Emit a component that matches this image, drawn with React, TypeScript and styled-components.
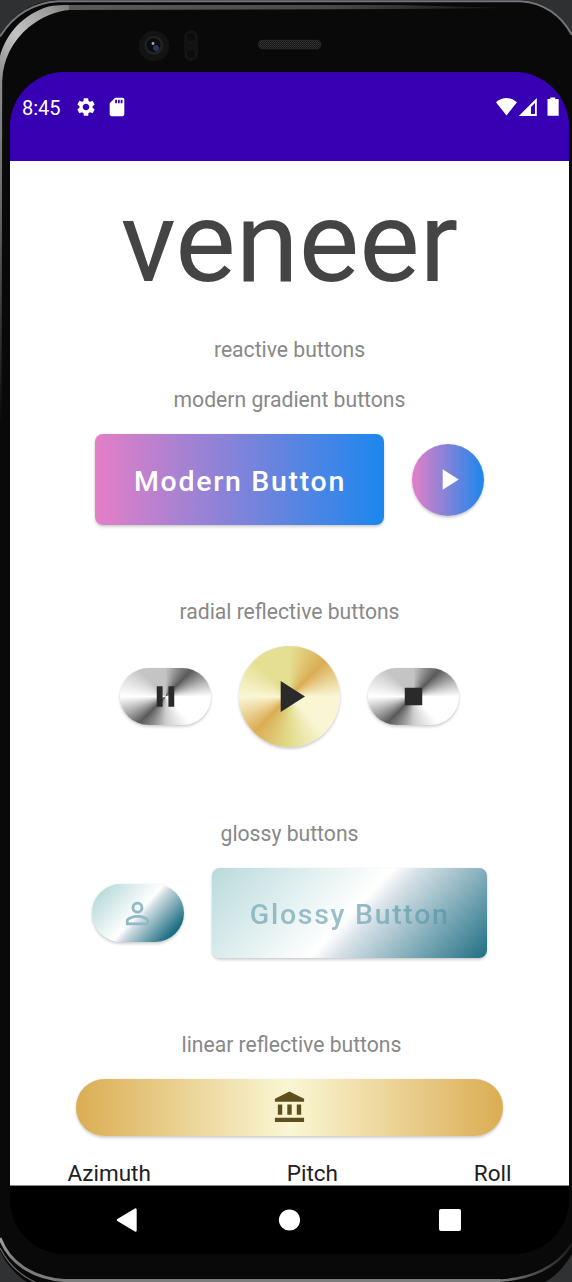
import React from 'react';
import styled, { createGlobalStyle } from 'styled-components';
import {
  MdAccountBalance,
  MdPause,
  MdPersonOutline,
  MdPlayArrow,
  MdSdCard,
  MdSettings,
  MdStop,
} from 'react-icons/md';

const GlobalStyle = createGlobalStyle`
  * { box-sizing: border-box; }
  body {
    margin: 0;
    background: #2d2e30;
    font-family: Roboto, "Liberation Sans", sans-serif;
  }
`;

const silver = `conic-gradient(#c4c4c4 0deg, #5a5a5a 45deg, #ffffff 90deg, #ffffff 135deg,
  #cccccc 180deg, #5a5a5a 225deg, #ffffff 270deg, #c4c4c4 315deg, #c4c4c4 360deg)`;
const gold = `conic-gradient(#e4df92 0deg, #dbad53 45deg, #faf6d4 90deg, #faf6d4 135deg,
  #e2dc8c 180deg, #dbad53 225deg, #faf6d4 270deg, #e4df92 315deg, #e4df92 360deg)`;
const modern = 'linear-gradient(90deg, #e47fc6, #1b87ee)';
const glossy = 'linear-gradient(133deg, #b9dadb, #ffffff 50.5%, #d6e1e7 58%, #1f6f84)';
const glossyPill = 'linear-gradient(132deg, #b9dadb 10%, #ffffff 50%, #cfdde3 56%, #1f6f84 86%)';
const goldBar = 'linear-gradient(90deg, #dbad53, #faf7d4 50%, #dbad53)';

const Stage = styled.div`
  position: relative;
  width: 572px;
  height: 1282px;
  overflow: hidden;
  padding: 72px 3px 28px 10px;
`;

const Shell = styled.svg`
  position: absolute;
  inset: 0;
`;

const Screen = styled.div`
  position: relative;
  display: flex;
  flex-direction: column;
  width: 559px;
  height: 1182px;
  overflow: hidden;
  border-radius: 55px;
  background: linear-gradient(#3700b3 80px, #fff 80px, #fff 1120px, #000 1120px);
`;

const StatusBar = styled.header`
  display: flex;
  align-items: flex-start;
  height: 88.6px;
  flex: none;
  padding: 24px 10.4px 0 12px;
  background: #3700b3;
  color: #fff;
`;

const Clock = styled.span`
  width: 53px;
  font-size: 20px;
  line-height: 24px;
`;

const StatusIcons = styled.div`
  display: flex;
  gap: 9px;
`;

const SignalIcons = styled.svg`
  margin-left: auto;
`;

const Content = styled.main`
  display: flex;
  flex-direction: column;
  align-items: center;
  flex: 1;
  min-height: 0;
  border-bottom: 1px solid #8a8a8a;
`;

const Title = styled.h1`
  margin: 7.4px 0 7px;
  height: 149px;
  font-size: 114px;
  line-height: 149px;
  font-weight: 400;
  color: #444;
`;

const Label = styled.p<{ $top: number }>`
  margin: ${(p) => p.$top}px 0 0;
  height: 30px;
  font-size: 21.15px;
  line-height: 30px;
  color: #888;
  white-space: nowrap;
`;

const LastLabel = styled(Label)`
  padding-left: 4px;
`;

const ButtonRow = styled.div<{ $top: number; $height: number }>`
  display: flex;
  align-items: center;
  justify-content: center;
  gap: 28px;
  height: ${(p) => p.$height}px;
  margin-top: ${(p) => p.$top}px;
`;

const VeneerButton = styled.button<{
  $w: number;
  $h: number;
  $radius: number;
  $fill: string;
  $ink: string;
}>`
  display: flex;
  align-items: center;
  justify-content: center;
  width: ${(p) => p.$w}px;
  height: ${(p) => p.$h}px;
  padding: 0;
  border: 0;
  border-radius: ${(p) => p.$radius}px;
  background: ${(p) => p.$fill};
  color: ${(p) => p.$ink};
  box-shadow: 0 2px 3px rgba(0, 0, 0, 0.18), 0 0 1px rgba(90, 60, 160, 0.25);
  font: 500 28.5px/40px Roboto, sans-serif;
  letter-spacing: 1.7px;
  white-space: nowrap;
`;

const ButtonText = styled.span`
  padding: 4.5px 0 0 1px;
`;

const GlossyText = styled(ButtonText)`
  padding-top: 3.5px;
  background: linear-gradient(90deg, #8fbac6, #9abfca 50%, #5f9bab);
  background-clip: text;
  color: transparent;
`;

const Readings = styled.div`
  display: flex;
  width: 100%;
  height: 30px;
  margin-top: 22px;
  padding: 0 57.5px;
  justify-content: space-between;
  font-size: 22.5px;
  line-height: 30px;
  color: #212121;
`;

const NavBar = styled.nav`
  display: flex;
  align-items: center;
  justify-content: space-between;
  height: 68px;
  flex: none;
  padding: 0 108px 0 106px;
  background: #000;
`;

function PhoneShell() {
  return (
    <Shell width="572" height="1282" viewBox="0 0 572 1282" fill="none">
      <defs>
        <linearGradient id="rim" x1="0" y1="80" x2="90" y2="0" gradientUnits="userSpaceOnUse">
          <stop offset="0" stopColor="#8c8c8e" />
          <stop offset="0.35" stopColor="#c4c4c4" />
          <stop offset="0.7" stopColor="#9a9a9a" />
          <stop offset="1" stopColor="#5b5b5b" />
        </linearGradient>
        <linearGradient id="sideRim" x1="0" y1="78" x2="0" y2="420" gradientUnits="userSpaceOnUse">
          <stop offset="0" stopColor="#8c8c8e" />
          <stop offset="0.4" stopColor="#666668" />
          <stop offset="1" stopColor="#0c0c0d" />
        </linearGradient>
        <linearGradient id="topRim" x1="60" y1="0" x2="510" y2="0" gradientUnits="userSpaceOnUse">
          <stop offset="0" stopColor="#5b5b5b" />
          <stop offset="0.6" stopColor="#4a4a4a" />
          <stop offset="1" stopColor="#111" />
        </linearGradient>
        <linearGradient id="baseRim" x1="0" y1="1225" x2="0" y2="1262" gradientUnits="userSpaceOnUse">
          <stop offset="0" stopColor="#2a2a2a" />
          <stop offset="0.4" stopColor="#a0a0a0" />
          <stop offset="1" stopColor="#7c7c7c" />
        </linearGradient>
        <linearGradient id="baseRimRight" x1="500" y1="0" x2="572" y2="0" gradientUnits="userSpaceOnUse">
          <stop offset="0" stopColor="#7c7c7c" />
          <stop offset="0.6" stopColor="#444" />
          <stop offset="1" stopColor="#1a1a1a" />
        </linearGradient>
        <pattern id="mesh" width="2" height="2" patternUnits="userSpaceOnUse">
          <rect width="2" height="2" fill="#161616" />
          <rect width="1" height="1" fill="#383838" />
          <rect x="1" y="1" width="1" height="1" fill="#2c2c2c" />
        </pattern>
      </defs>
      <rect width="572" height="1282" fill="#09090a" />
      <path d="M0 0H56C32 2 13 14 0 35Z" fill="#2e3032" />
      <path d="M521 0H572V33C560 12 543 2 521 0Z" fill="#2e3032" />
      <path d="M0 36.5C13 15.5 32 3 58 1.2H521C543 3 560 13 572 35" stroke="#73767a" strokeWidth="2" />
      <path
        d="M0 56C5 38 18 18 44 8C52 5 60 5 70 5L70 10C55 11 42 17 29 27C12 41 3 60 2.3 80H0Z"
        fill="url(#rim)"
      />
      <path d="M0 79.5H2.2L1.6 420H0Z" fill="url(#sideRim)" />
      <path d="M69 5H400L510 8L400 9L69 10Z" fill="url(#topRim)" />

      <path d="M0 1251C7 1265 16 1275 27 1282H0Z" fill="#303132" />
      <path d="M572 1254C564 1267 556 1276 545 1282H572Z" fill="#303132" />
      <path d="M0 1238C9 1262 31 1278 64 1280.5H500" stroke="url(#baseRim)" strokeWidth="3" />
      <path d="M500 1280.5C530 1279 557 1268 572 1244" stroke="url(#baseRimRight)" strokeWidth="2.5" />
      <path d="M0 1248C8 1264 19 1275 36 1282.5" stroke="#6c6c6e" strokeWidth="1.2" />

      <circle cx="154" cy="46" r="15.3" fill="#131313" />
      <circle cx="154" cy="45.5" r="9.5" fill="#212223" />
      <circle cx="153.5" cy="45" r="7" fill="#0b0c10" />
      <circle cx="156" cy="48" r="3" fill="#29365c" />
      <circle cx="153" cy="43.5" r="1.4" fill="#a8adb2" />
      <rect x="184" y="30" width="14" height="31" rx="7" fill="#131313" />
      <circle cx="191" cy="37" r="4.8" fill="#0c0c0c" stroke="#191919" />
      <circle cx="191" cy="54" r="4.8" fill="#0c0c0c" stroke="#191919" />
      <rect x="258.5" y="40.3" width="62.5" height="8.5" rx="4.2" fill="url(#mesh)" stroke="#2c2c2c" strokeWidth="0.8" />
    </Shell>
  );
}

export default function App() {
  return (
    <Stage>
      <GlobalStyle />
      <PhoneShell />
      <Screen>
        <StatusBar>
          <Clock>8:45</Clock>
          <StatusIcons>
            <MdSettings size={22} />
            <MdSdCard size={22} />
          </StatusIcons>
          <SignalIcons width="64" height="24" viewBox="0 0 64 24" fill="#fff">
            <path d="M1 6.2Q11.5-2.2 22 6.2L11.5 19.5Z" />
            <path fillRule="evenodd" d="M41.8 2V20H23.8ZM40 7L36 11V18H40Z" />
            <path d="M52.5 3H55.2V1.5H60.2V3H63.7V19.8H52.5V3Z" />
          </SignalIcons>
        </StatusBar>

        <Content>
          <Title>veneer</Title>
          <Label $top={11}>reactive buttons</Label>
          <Label $top={20}>modern gradient buttons</Label>
          <ButtonRow $top={19.4} $height={90.5}>
            <VeneerButton $w={289} $h={90.5} $radius={8} $fill={modern} $ink="#fff">
              <ButtonText>Modern Button</ButtonText>
            </VeneerButton>
            <VeneerButton $w={72} $h={72} $radius={36} $fill={modern} $ink="#fff" aria-label="Play">
              <MdPlayArrow size={35} />
            </VeneerButton>
          </ButtonRow>

          <Label $top={72.5}>radial reflective buttons</Label>
          <ButtonRow $top={19} $height={101}>
            <VeneerButton $w={91.5} $h={57.5} $radius={29} $fill={silver} $ink="#2a2a2a" aria-label="Pause">
              <MdPause size={35} />
            </VeneerButton>
            <VeneerButton $w={100.5} $h={100.5} $radius={51} $fill={gold} $ink="#2a2a2a" aria-label="Play">
              <MdPlayArrow size={53} />
            </VeneerButton>
            <VeneerButton $w={91.5} $h={57.5} $radius={29} $fill={silver} $ink="#2a2a2a" aria-label="Stop">
              <MdStop size={35} />
            </VeneerButton>
          </ButtonRow>

          <Label $top={72}>glossy buttons</Label>
          <ButtonRow $top={19} $height={91}>
            <VeneerButton $w={91.5} $h={57.5} $radius={29} $fill={glossyPill} $ink="#8fbac6" aria-label="Profile">
              <MdPersonOutline size={35} />
            </VeneerButton>
            <VeneerButton $w={275.5} $h={90.5} $radius={8} $fill={glossy} $ink="#8fbac6">
              <GlossyText>Glossy Button</GlossyText>
            </VeneerButton>
          </ButtonRow>

          <LastLabel $top={71.5}>linear reflective buttons</LastLabel>
          <ButtonRow $top={19.5} $height={57}>
            <VeneerButton $w={427.5} $h={57} $radius={29} $fill={goldBar} $ink="#5f4f1c" aria-label="Bank">
              <MdAccountBalance size={35} />
            </VeneerButton>
          </ButtonRow>

          <Readings>
            <span>Azimuth</span>
            <span>Pitch</span>
            <span>Roll</span>
          </Readings>
        </Content>

        <NavBar>
          <svg width="22" height="26" viewBox="0 0 22 26" fill="#fff">
            <path
              d="M2 13L19.5 2.5V23.5Z"
              stroke="#fff"
              strokeWidth="2.4"
              strokeLinejoin="round"
            />
          </svg>
          <svg width="22" height="22" viewBox="0 0 22 22">
            <circle cx="11.5" cy="11" r="10.6" fill="#fff" />
          </svg>
          <svg width="22" height="22" viewBox="0 0 22 22">
            <rect width="22" height="22" rx="2" fill="#fff" />
          </svg>
        </NavBar>
      </Screen>
    </Stage>
  );
}
